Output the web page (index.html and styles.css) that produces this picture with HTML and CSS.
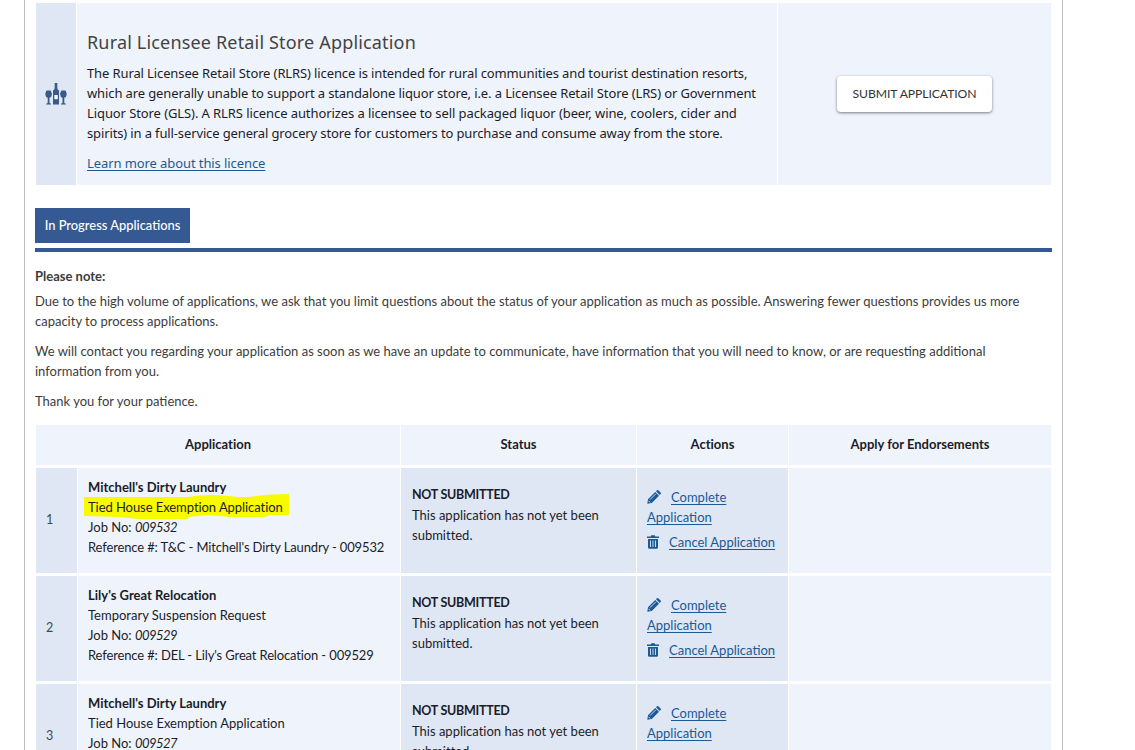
FILE: index.html
```html
<!DOCTYPE html>
<html lang="en"><head><meta charset="utf-8"><title>Licence Applications</title>
<link rel="stylesheet" href="styles.css"></head>
<body>
<svg class="defs" width="0" height="0">
<symbol id="pencil" viewBox="0 0 14 14"><path d="M1 9.2 8.2 2l3.8 3.8L4.8 13 .3 13.7zM9 1.2l.9-.9q.8-.6 1.6.1l2.1 2.1q.7.8 0 1.6l-.9.9z"/><path class="cut" d="m3 9.6 5.7-5.7M1.500 10.800l1.700 1.700"/></symbol>
<symbol id="trash" viewBox="0 0 12 14"><path d="M0 1.400h3.600L4.400.2h3.200l.8 1.200H12V3H0zM1 4h10v8.500q0 1.300-1.300 1.300H2.300Q1 13.800 1 12.500z"/><path class="cut" d="M3.500 5.500v6.500M6 5.500v6.500M8.500 5.500v6.500"/></symbol>
</svg>
<main class="page">
<section class="card">
<div class="card-icon"><svg width="22" height="22" viewBox="0 0 22 22"><path d="M9.700 0h2.600v5q0 1.500 1.700 2.500v14H8v-14Q9.700 6.500 9.700 5zM1.500 7.500h4.200q2.800 5.500-1.200 7.300v5.200l1.500.7v.8H1.200v-.8l1.500-.7v-5.200Q-1.300 13 1.500 7.500zM16.300 7.500h4.200q2.800 5.500-1.200 7.300v5.200l1.500.7v.8H16v-.8l1.500-.7v-5.200q-4-1.800-1.200-7.300z"/><path class="label" d="M9.300 12h3.500v4.200H9.300z"/></svg></div>
<div class="card-text"><h2>Rural Licensee Retail Store Application</h2>
<p class="ink">The Rural Licensee Retail Store (RLRS) licence is intended for rural communities and tourist destination resorts,<br>which are generally unable to support a standalone liquor store, i.e. a Licensee Retail Store (LRS) or Government<br><span class="looser">Liquor Store (GLS). A RLRS licence authorizes a licensee to sell packaged liquor (beer, wine, coolers, cider and</span><br><span class="tighter">spirits) in a full-service general grocery store for customers to purchase and consume away from the store.</span></p>
<a class="learn" href="#">Learn more about this licence</a></div>
<div class="card-action"><button>SUBMIT APPLICATION</button></div>
</section>
<nav class="tabs"><span class="tab">In Progress Applications</span></nav>
<section class="note"><strong>Please note:</strong>
<p>Due to the high volume of applications, we ask that you limit questions about the status of your application as much as possible. Answering fewer questions provides us more<br>capacity to process applications.</p>
<p>We will contact you regarding your application as soon as we have an update to communicate, have information that you will need to know, or are requesting additional<br>information from you.</p>
<p>Thank you for your patience.</p></section>
<section class="table">
<div class="row head"><div class="th wide">Application</div><div class="th">Status</div><div class="th">Actions</div><div class="th">Apply for Endorsements</div></div>
<div class="row"><div class="num">1</div><div class="app"><b>Mitchell's Dirty Laundry</b><span class="mark"><svg width="205" height="25" viewBox="0 0 205 25"><path d="M0 3 104 3Q124-1 154 3H165Q185 0 205 0V21L187 21 180 23H147L124 21 104 23V25H54L36 23 0 22z"/></svg><span>Tied House Exemption Application</span></span><span>Job No: <i>009532</i></span><span class="ref">Reference #: T&amp;C - Mitchell's Dirty Laundry - 009532</span></div><div class="status"><b>NOT SUBMITTED</b><span>This application has not yet been<br>submitted.</span></div><div class="actions"><div><svg class="pen"><use href="#pencil"/></svg><a href="#">Complete<br>Application</a></div><div><svg class="bin"><use href="#trash"/></svg><a href="#">Cancel Application</a></div></div><div class="end"></div></div>
<div class="row"><div class="num">2</div><div class="app"><b>Lily's Great Relocation</b><span>Temporary Suspension Request</span><span>Job No: <i>009529</i></span><span class="ref">Reference #: DEL - Lily's Great Relocation - 009529</span></div><div class="status"><b>NOT SUBMITTED</b><span>This application has not yet been<br>submitted.</span></div><div class="actions"><div><svg class="pen"><use href="#pencil"/></svg><a href="#">Complete<br>Application</a></div><div><svg class="bin"><use href="#trash"/></svg><a href="#">Cancel Application</a></div></div><div class="end"></div></div>
<div class="row"><div class="num">3</div><div class="app"><b>Mitchell's Dirty Laundry</b><span>Tied House Exemption Application</span><span>Job No: <i>009527</i></span></div><div class="status"><b>NOT SUBMITTED</b><span>This application has not yet been<br>submitted.</span></div><div class="actions"><div><svg class="pen"><use href="#pencil"/></svg><a href="#">Complete<br>Application</a></div></div><div class="end"></div></div>
</section>
</main></body></html>
```
FILE: styles.css
```css
* { box-sizing: border-box; }
body { margin: 0; height: 750px; overflow: hidden; background: #fff; color: #3c3c3c; font: 13px/20px "Noto Sans", sans-serif; }
.defs { position: absolute; }
.page { width: 1039px; height: 750px; margin-left: 24px; padding: 3px 10px 0; border: solid #c0bcc0; border-width: 0 1px; overflow: hidden; }
a { color: #1a5a96; text-decoration: underline; text-underline-offset: 2px; }
svg { fill: #1a5a96; display: block; }
.cut { fill: none; stroke: #dfe7f7; stroke-width: .9; }
.label { fill: #eef3fc; }

.card { display: grid; grid-template-columns: 40px 1px 700px 1px 273px; height: 182px; margin-left: 1px; }
.card-icon { grid-column: 1; display: flex; align-items: center; justify-content: center; background: #dfe7f5; }
.card-icon svg { fill: #38598a; }
.card-text { grid-column: 3; background: #eff4fc; padding: 27px 0 0 10px; white-space: nowrap; }
.card-text h2 { margin: 0 0 8px; font-size: 18px; line-height: 25px; font-weight: 400; letter-spacing: .17px; color: #434343; }
.card-text p { margin: 0 0 10px; letter-spacing: -.115px; }
.looser { letter-spacing: -.09px; }
.tighter { letter-spacing: -.13px; }
.learn { letter-spacing: -.09px; }
.ink { color: #1c1c28; }
.card-action { grid-column: 5; background: #eff4fc; display: flex; align-items: center; justify-content: center; }
button { width: 155px; height: 36px; border: 0; border-radius: 4px; background: #fff; box-shadow: 0 1px 3px rgba(0,0,0,.5); color: #333; font: 12.2px/20px Lato, sans-serif; letter-spacing: -.08px; padding: 0; white-space: nowrap; }

.tabs { margin-top: 23px; height: 44px; border-bottom: 4px solid #355992; }
.tab { display: block; width: 155px; height: 35px; background: #355992; color: #fff; font: 500 12.9px/35px Lato, sans-serif; text-align: center; white-space: nowrap; }

.note { font-family: Lato, sans-serif; padding-top: 14px; height: 173px; white-space: nowrap; }
.note strong { display: block; margin-bottom: 5px; }
.note p { margin: 0 0 10px; }

.table { display: grid; gap: 3px; margin-left: 1px; font-family: Lato, sans-serif; }
.row { display: grid; grid-template-columns: 41px 322px 235px 151px 262px; column-gap: 1px; height: 105px; color: #1c1c28; white-space: nowrap; }
.row > div { background: #eff4fc; }
.row.head { height: 40px; }
.th { text-align: center; line-height: 38px; font-weight: 700; font-variant-ligatures: none; }
.wide { grid-column: span 2; }
.row > .num { background: #dfe7f5; display: flex; align-items: center; padding: 0 0 2px 10px; color: #3c4a52; font-size: 12.5px; }
.app { display: flex; flex-direction: column; padding: 9px 0 0 10px; font-variant-ligatures: none; }
.app i { letter-spacing: -.5px; }
.app .ref { letter-spacing: -.14px; }
.mark { position: relative; letter-spacing: -.06px; }
.mark svg { position: absolute; left: -4px; top: -3px; fill: #f8fa00; }
.mark span { position: relative; }
.row > .status { background: #dfe7f5; padding: 17px 0 0 11px; font-variant-ligatures: none; }
.status b { display: block; font-size: 12.5px; letter-spacing: -.28px; }
.row > .actions { background: #dfe7f5; padding: 19px 0 0 10px; }
.actions svg { float: left; }
.actions div + div { margin-top: 5px; }
.pen { width: 14px; height: 14px; margin: 3px 10px 0 0; }
.bin { width: 12px; height: 14px; margin: 3px 10px 0 0; }
```
